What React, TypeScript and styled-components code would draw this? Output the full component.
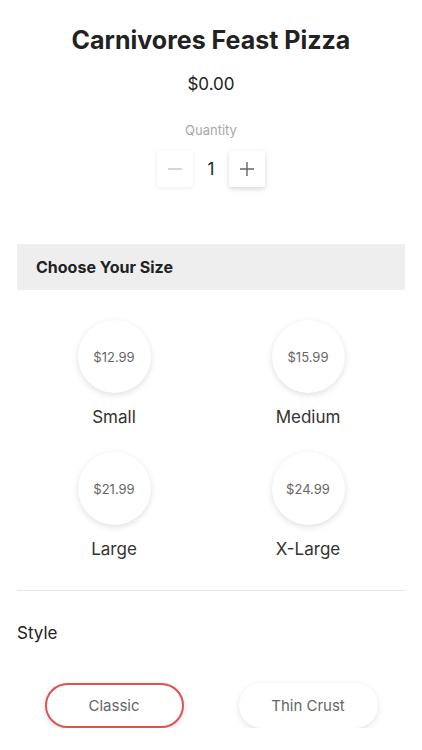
import React, { useState } from 'react';
import styled, { createGlobalStyle } from 'styled-components';

const GlobalStyle = createGlobalStyle`
  body {
    margin: 0;
    background: #ffffff;
    font-family: Inter, "Noto Sans", sans-serif;
    color: #222222;
  }
`;

const Page = styled.div`
  width: 422px;
  padding: 0 17px;
  box-sizing: border-box;
`;

const Header = styled.header`
  display: flex;
  flex-direction: column;
  align-items: center;
`;

const Title = styled.h1`
  margin: 25px 0 0;
  font-size: 25px;
  line-height: 30px;
  font-weight: 700;
  color: #222222;
`;

const Price = styled.div`
  margin-top: 18px;
  font-size: 17px;
  line-height: 22px;
  color: #222222;
`;

const QtyLabel = styled.div`
  margin-top: 26px;
  font-size: 13px;
  line-height: 18px;
  color: #a8a8a8;
`;

const Stepper = styled.div`
  margin-top: 12px;
  display: flex;
  align-items: center;
`;

const StepButton = styled.button<{ $strong?: boolean }>`
  width: 36px;
  height: 36px;
  border: none;
  border-radius: 2px;
  background: #ffffff;
  padding: 0;
  display: flex;
  align-items: center;
  justify-content: center;
  cursor: pointer;
  box-shadow: ${p =>
    p.$strong ? '0 2px 5px rgba(0, 0, 0, 0.16)' : '0 1px 4px rgba(0, 0, 0, 0.08)'};
`;

const QtyValue = styled.span`
  width: 36px;
  text-align: center;
  font-size: 17px;
  color: #222222;
`;

const SectionBar = styled.div`
  margin-top: 57px;
  height: 46px;
  background: #eeeeee;
  border-radius: 2px;
  display: flex;
  align-items: center;
  padding-left: 19px;
  font-size: 16px;
  font-weight: 700;
  color: #222222;
`;

const SizeGrid = styled.div`
  display: grid;
  grid-template-columns: 1fr 1fr;
  row-gap: 24px;
  padding-top: 30px;
`;

const SizeOption = styled.button`
  border: none;
  background: none;
  padding: 0;
  display: flex;
  flex-direction: column;
  align-items: center;
  cursor: pointer;
  font-family: inherit;
`;

const Circle = styled.div`
  width: 73px;
  height: 73px;
  border-radius: 50%;
  background: #ffffff;
  box-shadow: 0 2px 6px rgba(0, 0, 0, 0.13);
  display: flex;
  align-items: center;
  justify-content: center;
  font-size: 13px;
  color: #666666;
`;

const SizeName = styled.div`
  margin-top: 13px;
  font-size: 17px;
  line-height: 22px;
  color: #333333;
`;

const Divider = styled.hr`
  margin: 30px 0 0;
  border: none;
  border-top: 1px solid #e6e6e6;
`;

const StyleLabel = styled.div`
  margin-top: 31px;
  font-size: 17px;
  line-height: 22px;
  color: #222222;
`;

const StyleRow = styled.div`
  display: grid;
  grid-template-columns: 1fr 1fr;
  padding-top: 39px;
  justify-items: center;
`;

const Pill = styled.button<{ $active?: boolean }>`
  width: 139px;
  height: 45px;
  border-radius: 23px;
  background: #ffffff;
  font-family: inherit;
  font-size: 15px;
  color: #666666;
  cursor: pointer;
  border: ${p => (p.$active ? '2px solid #e05252' : '2px solid transparent')};
  box-shadow: 0 2px 6px rgba(0, 0, 0, 0.12);
`;

const sizes = [
  { name: 'Small', price: '$12.99' },
  { name: 'Medium', price: '$15.99' },
  { name: 'Large', price: '$21.99' },
  { name: 'X-Large', price: '$24.99' },
];

const crusts = ['Classic', 'Thin Crust'];

export default function App() {
  const [qty, setQty] = useState(1);
  const [crust, setCrust] = useState('Classic');

  return (
    <>
      <GlobalStyle />
      <Page>
        <Header>
          <Title>Carnivores Feast Pizza</Title>
          <Price>$0.00</Price>
          <QtyLabel>Quantity</QtyLabel>
          <Stepper>
            <StepButton onClick={() => setQty(q => Math.max(1, q - 1))} aria-label="decrease">
              <svg width="16" height="16" viewBox="0 0 16 16">
                <path d="M1 8h14" stroke="#c4c4c4" strokeWidth="1.4" />
              </svg>
            </StepButton>
            <QtyValue>{qty}</QtyValue>
            <StepButton $strong onClick={() => setQty(q => q + 1)} aria-label="increase">
              <svg width="16" height="16" viewBox="0 0 16 16">
                <path d="M1 8h14M8 1v14" stroke="#666666" strokeWidth="1.4" />
              </svg>
            </StepButton>
          </Stepper>
        </Header>

        <SectionBar>Choose Your Size</SectionBar>

        <SizeGrid>
          {sizes.map(s => (
            <SizeOption key={s.name}>
              <Circle>{s.price}</Circle>
              <SizeName>{s.name}</SizeName>
            </SizeOption>
          ))}
        </SizeGrid>

        <Divider />

        <StyleLabel>Style</StyleLabel>

        <StyleRow>
          {crusts.map(c => (
            <Pill key={c} $active={crust === c} onClick={() => setCrust(c)}>
              {c}
            </Pill>
          ))}
        </StyleRow>
      </Page>
    </>
  );
}
